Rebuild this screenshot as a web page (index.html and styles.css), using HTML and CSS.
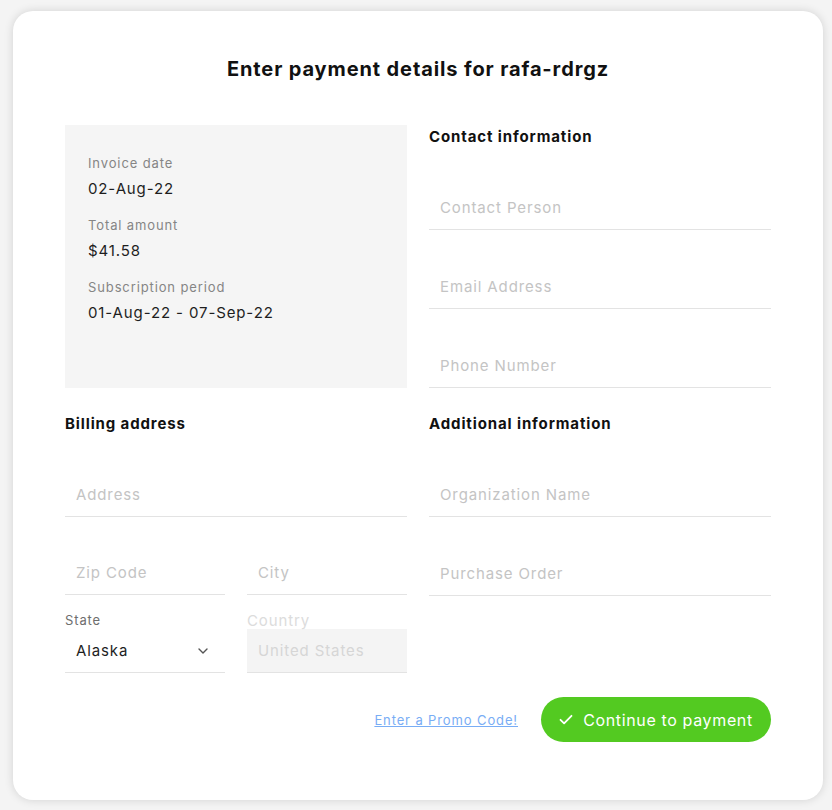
FILE: index.html
```html
<!DOCTYPE html>
<html lang="en">
<head>
<meta charset="utf-8">
<title>Payment details</title>
<link rel="stylesheet" href="styles.css">
</head>
<body>
<main class="card">
  <h1 class="title">Enter payment details for rafa-rdrgz</h1>
  <div class="grid">
    <section class="invoice">
      <div class="inv-item">
        <div class="inv-label">Invoice date</div>
        <div class="inv-value">02-Aug-22</div>
      </div>
      <div class="inv-item">
        <div class="inv-label">Total amount</div>
        <div class="inv-value">$41.58</div>
      </div>
      <div class="inv-item">
        <div class="inv-label">Subscription period</div>
        <div class="inv-value">01-Aug-22 - 07-Sep-22</div>
      </div>
    </section>
    <section class="group">
      <h2 class="group-title">Contact information</h2>
      <div class="field"><div class="input placeholder">Contact Person</div></div>
      <div class="field"><div class="input placeholder">Email Address</div></div>
      <div class="field"><div class="input placeholder">Phone Number</div></div>
    </section>
    <section class="group">
      <h2 class="group-title">Billing address</h2>
      <div class="field"><div class="input placeholder">Address</div></div>
      <div class="pair">
        <div class="field"><div class="input placeholder">Zip Code</div></div>
        <div class="field"><div class="input placeholder">City</div></div>
      </div>
      <div class="pair">
        <div class="field">
          <div class="label">State</div>
          <div class="input select">
            <span>Alaska</span>
            <svg class="chev" width="10" height="6" viewBox="0 0 10 6"><path d="M1 1l4 4 4-4" fill="none" stroke="#555" stroke-width="1.4" stroke-linecap="round" stroke-linejoin="round"/></svg>
          </div>
        </div>
        <div class="field">
          <div class="label label-disabled">Country</div>
          <div class="input disabled">United States</div>
        </div>
      </div>
    </section>
    <section class="group">
      <h2 class="group-title">Additional information</h2>
      <div class="field"><div class="input placeholder">Organization Name</div></div>
      <div class="field"><div class="input placeholder">Purchase Order</div></div>
    </section>
  </div>
  <div class="actions">
    <a class="promo" href="#">Enter a Promo Code!</a>
    <button class="continue" type="button">
      <svg width="14" height="11" viewBox="0 0 14 11"><path d="M1.5 5.8l3.6 3.6L12.5 1.8" fill="none" stroke="#fff" stroke-width="1.8" stroke-linecap="round" stroke-linejoin="round"/></svg>
      <span>Continue to payment</span>
    </button>
  </div>
</main>
</body>
</html>
```
FILE: styles.css
```css
* { box-sizing: border-box; }
html, body { margin: 0; }
body {
  background: #f4f4f4;
  font-family: Inter, "Open Sans", sans-serif;
  letter-spacing: 0.055em;
  color: #1e1e1e;
  padding: 11px 9px 10px 13px;
}
.card {
  background: #fff;
  border-radius: 20px;
  box-shadow: 0 0 10px rgba(0,0,0,0.14);
  padding: 44px 52px 58px 52px;
  height: 789px;
}
.title {
  margin: 0;
  text-align: center;
  font-size: 20px;
  line-height: 28px;
  font-weight: 700;
  color: #111;
}
.grid {
  margin-top: 42px;
  display: grid;
  grid-template-columns: 342px 342px;
  column-gap: 22px;
  row-gap: 24px;
}
.invoice {
  background: #f5f5f5;
  padding: 29px 23px;
  display: flex;
  flex-direction: column;
  gap: 17px;
}
.inv-label {
  font-size: 13px;
  line-height: 18px;
  color: #858585;
}
.inv-value {
  margin-top: 7px;
  font-size: 15px;
  line-height: 20px;
  color: #1e1e1e;
}
.group { display: flex; flex-direction: column; }
.group-title {
  margin: 0;
  font-size: 15px;
  line-height: 24px;
  height: 26px;
  font-weight: 700;
  color: #111;
}
.field {
  padding-top: 35px;
  position: relative;
  min-width: 0;
}
.pair {
  display: grid;
  grid-template-columns: 1fr 1fr;
  column-gap: 22px;
}
.pair .field { padding-top: 34px; }
.input {
  height: 44px;
  border-bottom: 1px solid #e3e3e3;
  padding: 0 11px;
  display: flex;
  align-items: center;
  font-size: 15px;
  color: #1e1e1e;
}
.placeholder { color: #c4c4c4; }
.label {
  position: absolute;
  left: 0;
  top: 16px;
  font-size: 13px;
  line-height: 18px;
  color: #6e6e6e;
}
.label-disabled {
  font-size: 15px;
  color: #dcdcdc;
  top: 17px;
}
.select { justify-content: space-between; padding-right: 17px; }
.chev { display: block; }
.disabled {
  background: #f4f4f4;
  color: #d6d6d6;
}
.actions {
  margin-top: 24px;
  display: flex;
  justify-content: flex-end;
  align-items: center;
  gap: 23px;
}
.promo {
  font-size: 13px;
  color: #79adf5;
  text-decoration: underline;
}
.continue {
  width: 230px;
  height: 45px;
  border: none;
  border-radius: 23px;
  background: #53ca21;
  color: #fff;
  font-family: inherit;
  font-size: 16px;
  letter-spacing: 0.04em;
  display: flex;
  align-items: center;
  justify-content: center;
  gap: 10px;
  cursor: pointer;
}
.continue svg { display: block; }
```
